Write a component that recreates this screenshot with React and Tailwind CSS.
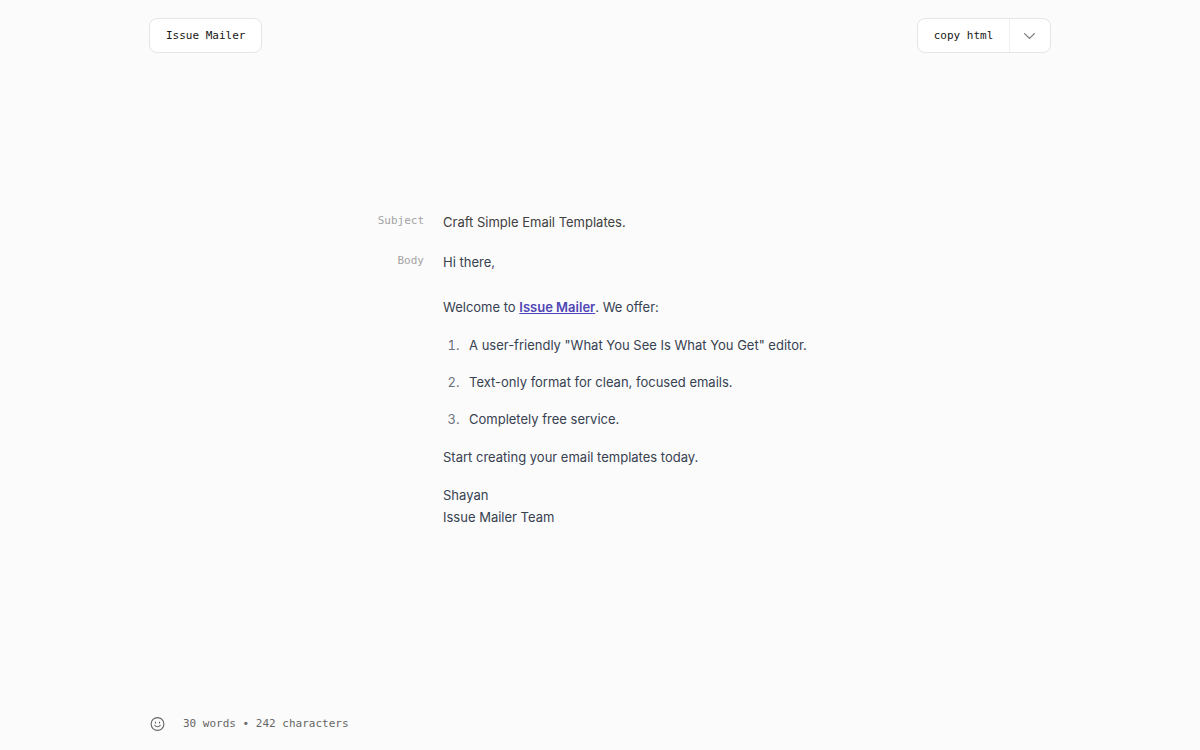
import React from "react";

const mono = "font-['DejaVu_Sans_Mono',monospace] text-[11px] leading-5";

function Header() {
  return (
    <header className="flex items-center justify-between pt-[18px]">
      <a
        href="#home"
        className={`${mono} flex h-[35px] items-center rounded-lg border border-[#e5e5e5] bg-white px-4 text-[#171717]`}
      >
        Issue Mailer
      </a>
      <div className="flex h-[35px] overflow-hidden rounded-lg border border-[#e5e5e5] bg-white">
        <button type="button" className={`${mono} min-w-[91px] px-[15px] text-[#171717]`}>
          copy html
        </button>
        <button
          type="button"
          aria-label="More copy options"
          className="flex w-[41px] items-center justify-center border-l border-[#f0f0f0] text-[#7c7c7c]"
        >
          <svg className="size-3.5" viewBox="0 0 14 14" fill="none" stroke="currentColor" strokeWidth="1.3" strokeLinecap="round" strokeLinejoin="round">
            <path d="M1.6 4.6 6.5 9.4l4.9-4.8" />
          </svg>
        </button>
      </div>
    </header>
  );
}

function Editor() {
  return (
    <main className="mx-auto mb-7 grid w-full max-w-md grid-cols-[48px_minmax(0,1fr)] gap-x-[19px] gap-y-[18px] text-[13px] leading-[22px] text-[#374151]">
      <label htmlFor="subject" className={`${mono} text-right text-[#a3a3a3]`}>
        Subject
      </label>
      <input
        id="subject"
        type="text"
        defaultValue="Craft Simple Email Templates."
        className="h-[22px] w-full bg-transparent text-[#404040] outline-none"
      />
      <span id="body-label" className={`${mono} text-right text-[#a3a3a3]`}>
        Body
      </span>
      <div
        role="textbox"
        aria-multiline="true"
        aria-labelledby="body-label"
        contentEditable
        suppressContentEditableWarning
        className="flex flex-col gap-4 outline-none"
      >
        <p className="mb-[7px]">Hi there,</p>
        <p>
          Welcome to{" "}
          <a href="#issue-mailer" className="font-semibold text-[#4f46b5] underline">
            Issue Mailer
          </a>
          . We offer:
        </p>
        <ol className="flex list-decimal flex-col gap-[15px] pl-5 marker:text-[#6b7280]">
          <li className="pl-[6px]">A user-friendly "What You See Is What You Get" editor.</li>
          <li className="pl-[6px]">Text-only format for clean, focused emails.</li>
          <li className="pl-[6px]">Completely free service.</li>
        </ol>
        <p>Start creating your email templates today.</p>
        <p>
          Shayan
          <br />
          Issue Mailer Team
        </p>
      </div>
    </main>
  );
}

function Footer() {
  return (
    <footer className={`${mono} flex items-center gap-[18px] pb-4 text-[#666666]`}>
      <button type="button" aria-label="Send feedback" className="flex size-4 items-center justify-center">
        <svg className="size-4" viewBox="0 0 16 16" fill="none" stroke="currentColor" strokeWidth="1.1" strokeLinecap="round">
          <circle cx="8.5" cy="8" r="6.4" />
          <path d="M5.8 9.3c1.2 2 4.2 2 5.4 0" />
          <path d="M6.5 6v.9M10.5 6v.9" />
        </svg>
      </button>
      <p>30 words • 242 characters</p>
    </footer>
  );
}

export default function App() {
  return (
    <div className="flex min-h-screen flex-col bg-[#fbfbfb] font-['Inter',sans-serif]">
      <div className="mx-auto flex w-full max-w-[902px] flex-1 flex-col justify-between">
        <Header />
        <Editor />
        <Footer />
      </div>
    </div>
  );
}
